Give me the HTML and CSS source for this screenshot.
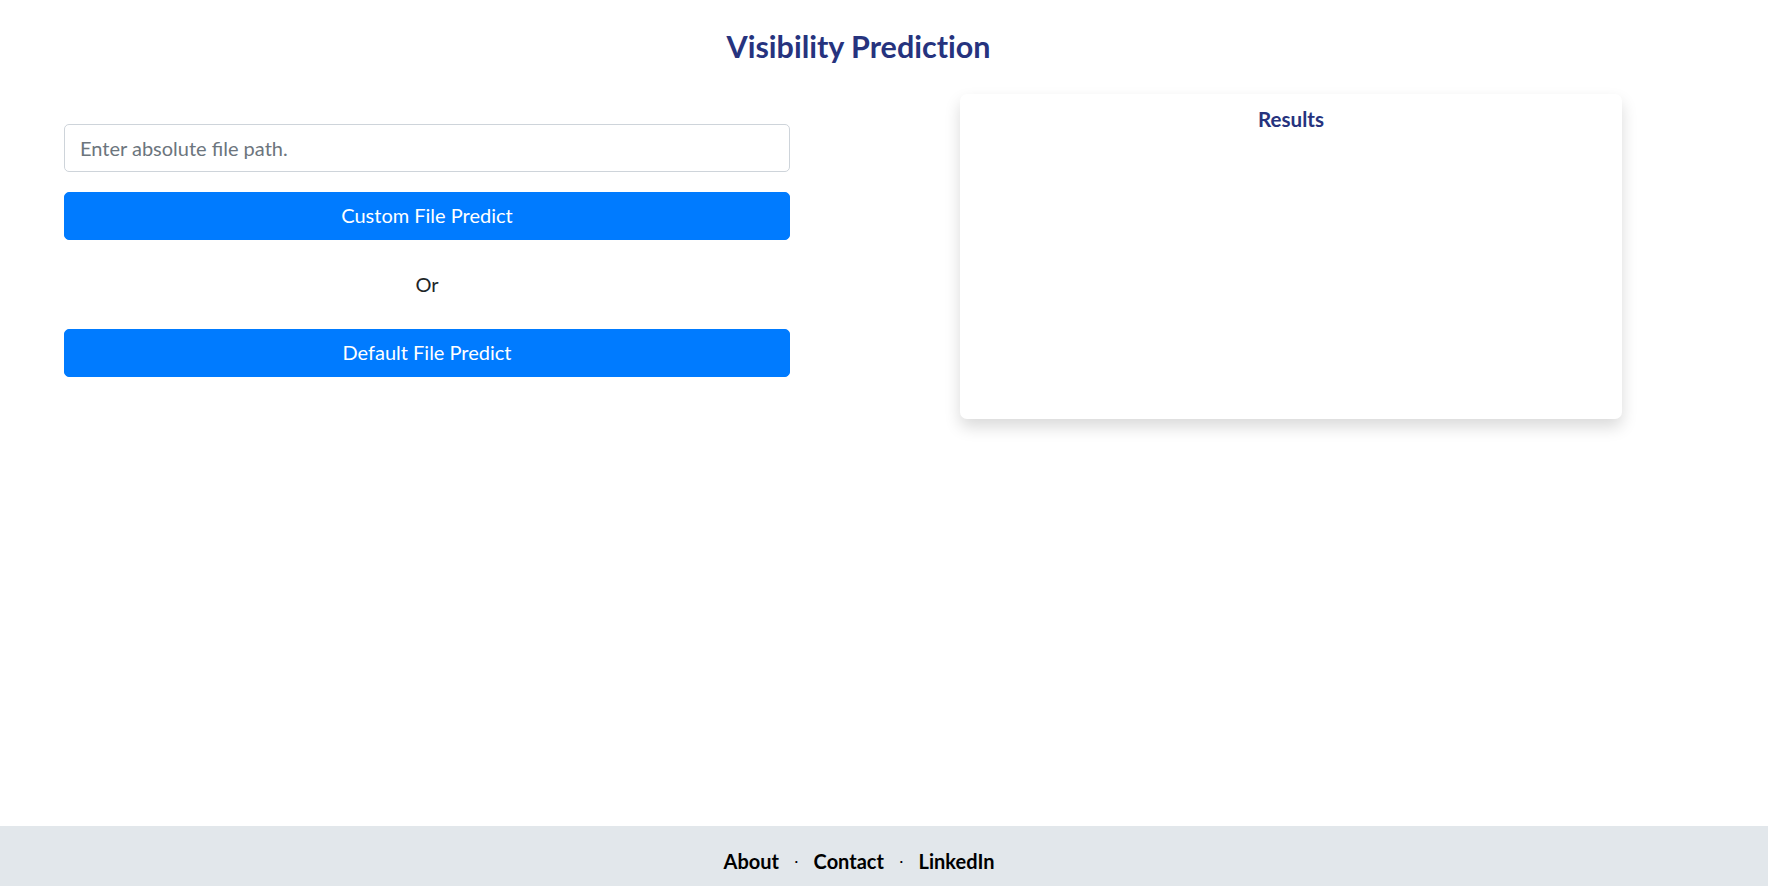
FILE: index.html
```html
<!DOCTYPE html>
<html lang="en">
<head>
<meta charset="utf-8">
<title>Visibility Prediction</title>
<link rel="stylesheet" href="styles.css">
</head>
<body>
<div class="page">
  <header class="header">
    <h2 class="title">Visibility Prediction</h2>
  </header>
  <main class="main">
    <section class="controls">
      <input class="path-input" type="text" placeholder="Enter absolute file path.">
      <button class="btn-primary" type="button">Custom File Predict</button>
      <p class="or">Or</p>
      <button class="btn-primary" type="button">Default File Predict</button>
    </section>
    <section class="results-card">
      <h5 class="results-title">Results</h5>
      <div class="results-body"></div>
    </section>
  </main>
  <footer class="footer">
    <a class="footer-link" href="#">About</a>
    <span class="sep">·</span>
    <a class="footer-link" href="#">Contact</a>
    <span class="sep">·</span>
    <a class="footer-link" href="#">LinkedIn</a>
  </footer>
</div>
</body>
</html>
```

FILE: styles.css
```css
* { box-sizing: border-box; }
html, body { margin: 0; padding: 0; }
body {
  font-family: Lato, "Noto Sans", sans-serif;
  color: #212529;
  background: #fff;
  font-size: 16px;
  line-height: 1.5;
}
.page {
  min-height: 100vh;
  display: flex;
  flex-direction: column;
}
.header {
  display: flex;
  justify-content: center;
  padding-top: 28px;
  padding-right: 51px;
}
.title {
  margin: 0;
  font-size: 30.5px;
  line-height: 1.2;
  font-weight: 700;
  color: #26337e;
  font-variant-ligatures: none;
}
.main {
  display: grid;
  grid-template-columns: 726px 662px;
  column-gap: 170px;
  padding-left: 64px;
  margin-top: 29px;
  align-items: start;
}
.controls {
  display: flex;
  flex-direction: column;
  padding-top: 30px;
}
.path-input {
  height: 48px;
  padding: 8px 15px;
  font-family: inherit;
  font-size: 20px;
  line-height: 1.5;
  color: #495057;
  border: 1px solid #ced4da;
  border-radius: 5px;
  outline: none;
}
.path-input::placeholder { color: #6c757d; }
.btn-primary {
  margin-top: 20px;
  height: 48px;
  padding: 7px 16px 9px;
  font-family: inherit;
  font-size: 20px;
  line-height: 1.5;
  color: #fff;
  background: #007bff;
  border: 1px solid #007bff;
  border-radius: 5px;
  cursor: pointer;
}
.or {
  margin: 29px 0 10px;
  text-align: center;
  font-size: 20px;
  line-height: 30px;
  color: #212529;
}
.results-card {
  height: 325px;
  background: #fff;
  border-radius: 7px;
  box-shadow: 0 8px 16px rgba(0, 0, 0, 0.15);
  padding-top: 13px;
}
.results-title {
  margin: 0;
  text-align: center;
  font-size: 20.6px;
  line-height: 1.2;
  font-weight: 700;
  color: #26337e;
}
.footer {
  margin-top: auto;
  height: 60px;
  background: #e2e7eb;
  display: flex;
  justify-content: center;
  align-items: flex-start;
  padding-top: 20px;
  padding-right: 50px;
  font-size: 20px;
  line-height: 30px;
}
.footer-link {
  color: #000;
  text-decoration: none;
  font-weight: 700;
}
.sep {
  margin: 0 15.5px;
  font-size: 14px;
  color: #000;
}
```
